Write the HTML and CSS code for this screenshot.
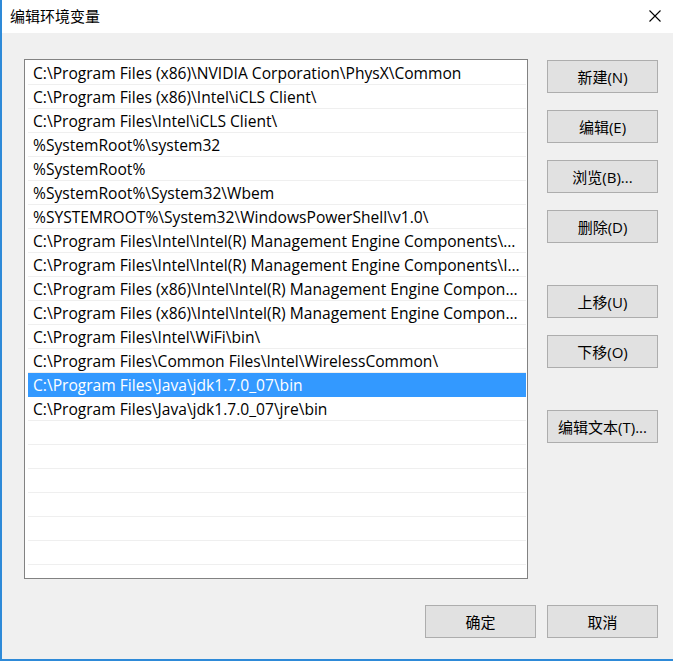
FILE: index.html
```html
<!DOCTYPE html>
<html lang="zh-CN">
<head>
    <meta charset="UTF-8">
    <title>编辑环境变量</title>
    <link rel="stylesheet" href="styles.css">
</head>
<body>
    <div class="window">
        <div class="titlebar">
            <span class="title">编辑环境变量</span>
            <svg class="close" width="12" height="12" viewBox="0 0 12 12">
                <path d="M0.5 0.5 L11.5 11.5 M11.5 0.5 L0.5 11.5" stroke="#000" stroke-width="1.1" fill="none"/>
            </svg>
        </div>

        <div class="content">
            <div class="main">
                <!-- 路径列表 -->
                <ul class="list">
                    <li class="row">C:\Program Files (x86)\NVIDIA Corporation\PhysX\Common</li>
                    <li class="row">C:\Program Files (x86)\Intel\iCLS Client\</li>
                    <li class="row">C:\Program Files\Intel\iCLS Client\</li>
                    <li class="row">%SystemRoot%\system32</li>
                    <li class="row">%SystemRoot%</li>
                    <li class="row">%SystemRoot%\System32\Wbem</li>
                    <li class="row">%SYSTEMROOT%\System32\WindowsPowerShell\v1.0\</li>
                    <li class="row">C:\Program Files\Intel\Intel(R) Management Engine Components\DAL</li>
                    <li class="row">C:\Program Files\Intel\Intel(R) Management Engine Components\IPT</li>
                    <li class="row">C:\Program Files (x86)\Intel\Intel(R) Management Engine Components\DAL</li>
                    <li class="row">C:\Program Files (x86)\Intel\Intel(R) Management Engine Components\IPT</li>
                    <li class="row">C:\Program Files\Intel\WiFi\bin\</li>
                    <li class="row">C:\Program Files\Common Files\Intel\WirelessCommon\</li>
                    <li class="row selected">C:\Program Files\Java\jdk1.7.0_07\bin</li>
                    <li class="row">C:\Program Files\Java\jdk1.7.0_07\jre\bin</li>
                    <li class="row"></li>
                    <li class="row"></li>
                    <li class="row"></li>
                    <li class="row"></li>
                    <li class="row"></li>
                    <li class="row"></li>
                    <li class="row"></li>
                </ul>

                <div class="side">
                    <button class="btn">新建(N)</button>
                    <button class="btn">编辑(E)</button>
                    <button class="btn">浏览(B)...</button>
                    <button class="btn">删除(D)</button>
                    <button class="btn group">上移(U)</button>
                    <button class="btn">下移(O)</button>
                    <button class="btn group">编辑文本(T)...</button>
                </div>
            </div>

            <div class="footer">
                <button class="btn">确定</button>
                <button class="btn">取消</button>
            </div>
        </div>
    </div>
</body>
</html>
```

FILE: styles.css
```css
* {
    margin: 0;
    padding: 0;
    box-sizing: border-box;
}

body {
    font-family: "Open Sans", "Noto Sans CJK SC", sans-serif;
    font-size: 15px;
    color: #000;
    background: #f0f0f0;
}

.window {
    width: 673px;
    height: 661px;
    border-left: 2px solid #2e8ad8;
    border-bottom: 2px solid #2e8ad8;
    display: flex;
    flex-direction: column;
    overflow: hidden;
}

.titlebar {
    height: 33px;
    background: #fff;
    display: flex;
    align-items: center;
    justify-content: space-between;
    padding: 0 12px 2px 8px;
}

.title {
    font-family: "Noto Sans CJK SC", sans-serif;
    font-size: 15px;
}

.content {
    flex: 1;
    background: #f0f0f0;
    padding: 26px 15px 21px 22px;
    display: flex;
    flex-direction: column;
}

.main {
    display: flex;
    align-items: flex-start;
}

.list {
    list-style: none;
    width: 504px;
    height: 520px;
    border: 1px solid #828282;
    background: #fff;
    padding: 1px 1px 0 3px;
    overflow: hidden;
    font-size: 15.6px;
}

.row {
    height: 24px;
    line-height: 23px;
    padding: 1px 6px 0 5px;
    border-bottom: 1px solid #efefef;
    white-space: nowrap;
    overflow: hidden;
    text-overflow: ellipsis;
}

.row.selected {
    background: #3399ff;
    color: #fff;
    border-bottom-color: #3399ff;
}

.side {
    margin-left: 19px;
    padding-top: 1px;
    display: flex;
    flex-direction: column;
    gap: 17px;
}

.side .group {
    margin-top: 25px;
}

.btn {
    width: 111px;
    height: 33px;
    background: #e1e1e1;
    border: 1px solid #adadad;
    font: inherit;
    font-size: 15px;
    color: #000;
}

.footer {
    margin-top: auto;
    display: flex;
    justify-content: flex-end;
    gap: 11px;
}
```
